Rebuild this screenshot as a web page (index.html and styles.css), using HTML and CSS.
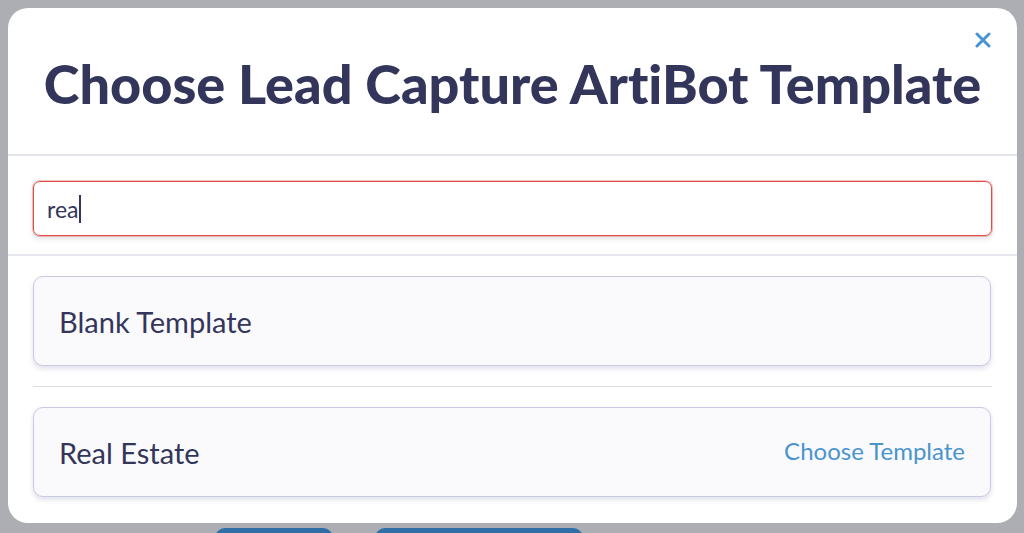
FILE: index.html
```html
<!DOCTYPE html>
<html lang="en">
<head>
    <meta charset="UTF-8">
    <meta name="viewport" content="width=device-width, initial-scale=1.0">
    <title>Choose Template</title>
    <link rel="stylesheet" href="styles.css">
</head>
<body>
    <div class="page">
        <div class="modal">
            <div class="modal-header">
                <h1>Choose Lead Capture ArtiBot Template</h1>
                <button class="close" aria-label="Close">
                    <svg width="16" height="16" viewBox="0 0 16 16"><path d="M2 2L14 14M14 2L2 14" stroke="#4a94d2" stroke-width="3" stroke-linecap="round"/></svg>
                </button>
            </div>
            <div class="search">
                <div class="search-box">rea<span class="caret"></span></div>
            </div>
            <div class="templates">
                <div class="template">
                    <span class="name">Blank Template</span>
                </div>
                <hr class="sep">
                <div class="template">
                    <span class="name">Real Estate</span>
                    <a class="choose" href="#">Choose Template</a>
                </div>
            </div>
        </div>
        <div class="under">
            <span class="btn small"></span>
            <span class="btn wide"></span>
        </div>
    </div>
</body>
</html>
```

FILE: styles.css
```css
body { margin: 0; background: #adadb4; font-family: Lato, "Open Sans", sans-serif; font-variant-ligatures: none; overflow: hidden; height: 533px; }
.page { padding: 8px 7px 0 8px; }
.modal { background: #fff; border-radius: 20px; height: 515px; display: flex; flex-direction: column; }
.modal-header { position: relative; height: 146px; border-bottom: 2px solid #e3e3ec; display: flex; align-items: center; justify-content: center; }
.modal-header h1 { margin: 0 0 -4px; font-size: 54px; font-weight: 900; color: #33365a; }
.close { position: absolute; top: 24px; right: 26px; background: none; border: none; padding: 0; cursor: pointer; }
.search { padding: 25px 25px 18px; border-bottom: 2px solid #e6e6ee; }
.search-box { height: 53px; border: 1px solid #df4f45; border-radius: 7px; box-shadow: 0 0 0 1px rgba(224, 86, 76, 0.35), 0 3px 5px rgba(60, 60, 110, 0.15); display: flex; align-items: center; padding: 0 13px; font-size: 23px; color: #33365a; }
.caret { display: inline-block; width: 1.5px; height: 28px; background: #33365a; margin-left: 1px; }
.templates { padding: 20px 25px 26px 25px; }
.template { height: 88px; border: 1px solid #c9c9e0; border-radius: 10px; background: #fafafd; box-shadow: 0 3px 5px rgba(90, 90, 150, 0.18); display: flex; align-items: center; justify-content: space-between; padding: 0 25px 0 25px; margin-right: 1px; }
.name { font-size: 29px; color: #33365a; }
.choose { font-size: 24px; color: #4a94cc; text-decoration: none; margin-top: -4px; }
.sep { border: none; border-top: 1px solid #dcdce6; margin: 20px 0; }
.under { display: flex; gap: 42px; padding-left: 207px; margin-top: 5px; }
.btn { height: 20px; background: #2f6ea6; border-radius: 12px; }
.btn.small { width: 118px; }
.btn.wide { width: 208px; }
```
